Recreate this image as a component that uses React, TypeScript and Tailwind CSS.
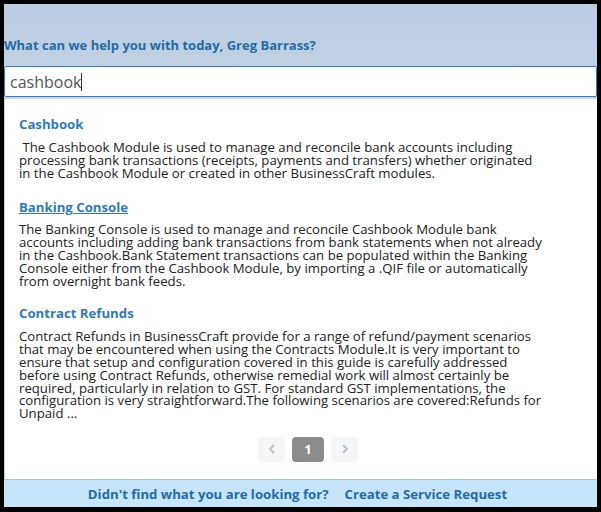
import React from "react";

const font = { fontFamily: '"Open Sans", "Liberation Sans", sans-serif' };

function Result({ title, underline, gap, children }: { title: string; underline?: boolean; gap: string; children: React.ReactNode }) {
  return (
    <div className="flex flex-col">
      <div className={`text-[13.2px] font-bold leading-[18px] text-[#2b7bbf] ${underline ? "underline" : ""}`}>{title}</div>
      <p className={`${gap} w-[526px] text-[13.2px] leading-[12.8px] text-[#222]`}>{children}</p>
    </div>
  );
}

export default function App() {
  return (
    <div className="w-[601px] h-[512px] bg-black pt-[4px] pl-[4px] pr-[4px] overflow-hidden" style={font}>
      <div className="flex flex-col w-[593px]">
        <div className="h-[95px] bg-gradient-to-b from-[#bccbe0] to-[#c6d3e6] flex flex-col">
          <div className="mt-[32px] h-[18px] text-[13px] font-bold leading-[18px] text-[#1e6ca6]">
            What can we help you with today, Greg Barrass?
          </div>
          <div className="mt-[12px] h-[31px] bg-white border border-[#2a7fcc] rounded-[2px] flex items-center pl-[5px]">
            <span className="text-[16px] text-[#555]">cashbook</span>
            <span className="w-px h-[18px] bg-[#333]"></span>
          </div>
        </div>
        <div className="h-[380px] bg-white border-l border-[#c8d0da] pl-[14px] pt-[16px] flex flex-col">
          <Result title="Cashbook" gap="mt-[8px]">
            &nbsp;The Cashbook Module is used to manage and reconcile bank accounts including processing bank transactions (receipts, payments and transfers) whether originated in the Cashbook Module or created in other BusinessCraft modules.
          </Result>
          <div className="h-[19px]"></div>
          <Result title="Banking Console" underline gap="mt-[7px]">
            The Banking Console is used to manage and reconcile Cashbook Module bank accounts including adding bank transactions from bank statements when not already in the Cashbook.Bank Statement transactions can be populated within the Banking Console either from the Cashbook Module, by importing a .QIF file or automatically from overnight bank feeds.
          </Result>
          <div className="h-[17px]"></div>
          <Result title="Contract Refunds" gap="mt-[8px]">
            Contract Refunds in BusinessCraft provide for a range of refund/payment scenarios that may be encountered when using the Contracts Module.It is very important to ensure that setup and configuration covered in this guide is carefully addressed before using Contract Refunds, otherwise remedial work will almost certainly be required, particularly in relation to GST. For standard GST implementations, the configuration is very straightforward.The following scenarios are covered:Refunds for Unpaid ...
          </Result>
          <div className="mt-[17px] flex justify-center gap-[7px]">
            <div className="w-[27px] h-[25px] rounded-[4px] bg-[#f5f6f8] flex items-center justify-center text-[#b9bec6]">
              <svg width="8" height="10" viewBox="0 0 8 10" fill="none" stroke="currentColor" strokeWidth="1.8"><path d="M6 1 L2 5 L6 9" /></svg>
            </div>
            <div className="w-[32px] h-[25px] rounded-[4px] bg-[#8c8c8c] flex items-center justify-center text-white text-[13px] font-bold">1</div>
            <div className="w-[27px] h-[25px] rounded-[4px] bg-[#f5f6f8] flex items-center justify-center text-[#b9bec6]">
              <svg width="8" height="10" viewBox="0 0 8 10" fill="none" stroke="currentColor" strokeWidth="1.8"><path d="M2 1 L6 5 L2 9" /></svg>
            </div>
          </div>
        </div>
        <div className="h-[28px] bg-[#c6e4fa] border-t border-[#a9c4da] flex items-center justify-center gap-[16px] pt-[3px] text-[13.2px] font-bold text-[#1f6ea8] pr-[6px]">
          <span>Didn't find what you are looking for?</span>
          <span>Create a Service Request</span>
        </div>
      </div>
    </div>
  );
}
